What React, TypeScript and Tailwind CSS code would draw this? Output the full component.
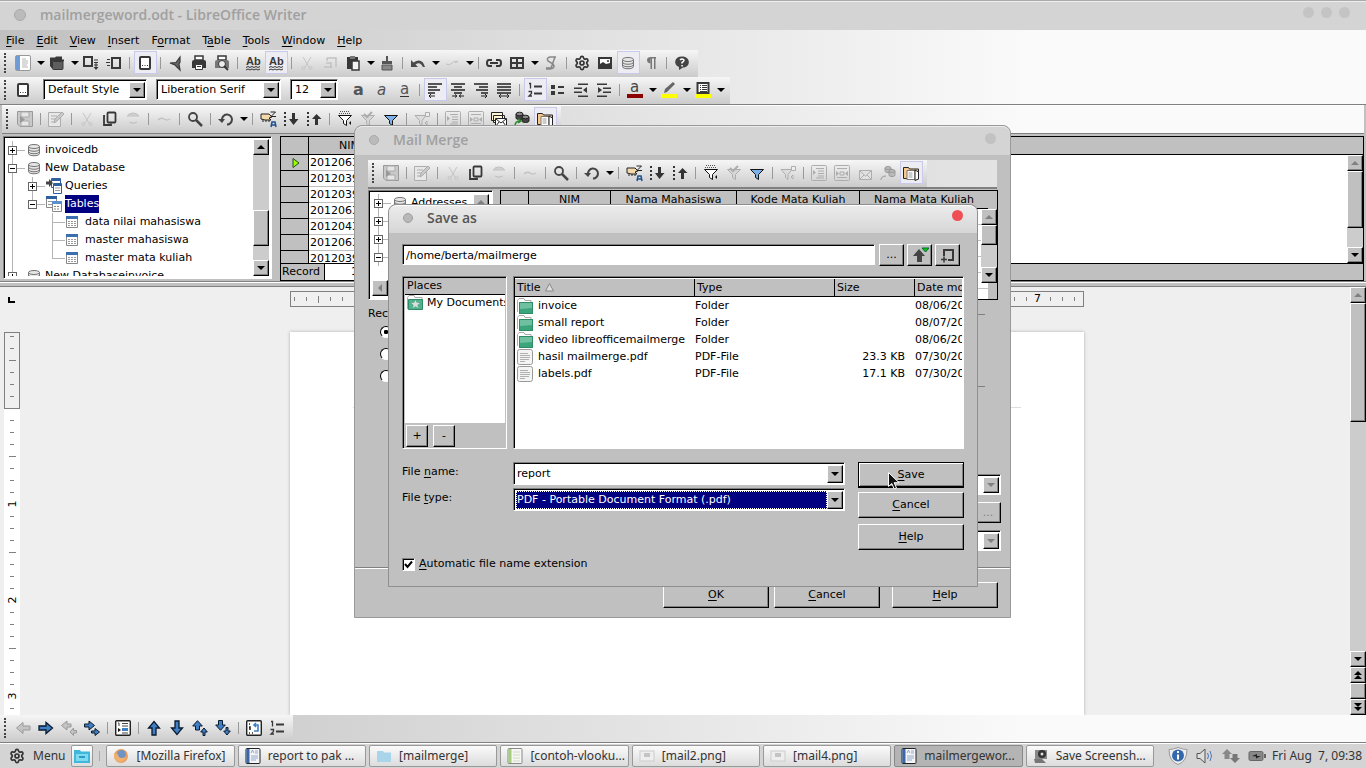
import type { ReactNode } from 'react'
import { Settings } from 'lucide-react'

const RAISED = 'border border-t-white border-l-white border-r-black border-b-black bg-[#c0c0c0] shadow-[inset_-1px_-1px_#808080]'
const SUNKEN = 'border border-t-[#808080] border-l-[#808080] border-r-white border-b-white shadow-[inset_1px_1px_#000]'
const BAR = 'bg-linear-to-b from-[#f6f6f6] to-[#cbcbcb]'
const FADE = 'bg-linear-to-r from-[#c0c0c0] to-[#fafafa] to-75%'

const D = '#383838'
const G = '#adadad'

const funnel = 'M1.5 4.5h13L9.5 9.5v5l-3-2v-3z'
const arrowR = 'M1 6h7V2.5l6.5 5.5L8 13.5V10H1z'

const disk = (
  <g>
    <path d="M.5.5h15v15H3L.5 13z" fill="#c9c9c9" stroke="#999" />
    <path d="M4 1h8v5H4zM4 10h8v5H4z" fill="#e6e6e6" stroke="#aaa" />
    <path d="M3 5l5 3.5L3 12z" fill="#999" />
  </g>
)

const ICONS: Record<string, ReactNode> = {
  new: <g><rect x=".5" y=".5" width="15" height="15" rx="1.5" fill="#fff" stroke="#999" /><path d="M1 1h4v14H1z" fill="#6f9cd4" /><path d="M7 4h4M7 6h6M7 8h6M7 10h5M7 12h6" stroke="#b5b5b5" /></g>,
  open: <g fill={D}><path d="M1 2.500h5l1-1h6v3h2v2H3v7L1 11z" /><path d="M3.500 6.500H14v7q0 1-1 1H4.500q-1 0-1-1z" fill="#5e5e5e" stroke={D} /></g>,
  save: <g stroke={D} fill="none"><rect x="1" y="2" width="8" height="9" strokeWidth="2" /><path d="M11 5h4M11 7.500h4M11 10h4M13 8v5" /><path d="M10.500 12h5L13 15z" fill={D} stroke="none" /></g>,
  mail: <g stroke={D} fill="none"><rect x="6" y="3" width="8" height="10" strokeWidth="2" /><path d="M1 4.500h3M0 7.500h4M1 10.500h3" /></g>,
  page: <g fill="none" stroke={D}><rect x="3" y="2" width="10" height="12" rx="1" strokeWidth="2" fill="#fff" /><path d="M5 10.500h6" strokeDasharray="1 1.500" /></g>,
  pdf: <path d="M12 2v5l-1 2 1 6-3-3-2-2-5-2 6-.5z" fill="#666" stroke={D} strokeWidth="1.200" />,
  print: <g fill={D}><path d="M4 1h8v4H4z" fill="#fff" stroke={D} strokeWidth="1.500" /><path d="M1 7q0-2 2-2h10q2 0 2 2v6H1z" /><path d="M4.500 9.500h7v5h-7z" fill="#fff" stroke={D} /><path d="M6 11h4v1H6z" /></g>,
  preview: <g fill={D}><path d="M4 1h8v4H4z" fill="#fff" stroke={D} strokeWidth="1.500" /><path d="M1 7q0-2 2-2h10q2 0 2 2v6H1z" fill="#777" /><circle cx="8" cy="9" r="3.500" fill="#eee" stroke={D} /><path d="M10 11l4 4" stroke={D} strokeWidth="2" /></g>,
  spell: <g><text x="1" y="10" fontSize="11" fontWeight="700" fill={D} fontFamily="Liberation Sans">Ab</text><path d="M1 12.500l2-1 2 1 2-1 2 1 2-1 2 1 2-1M1 15l2-1 2 1 2-1 2 1 2-1 2 1 2-1" stroke={D} fill="none" /></g>,
  cut: <g fill="none" stroke="#c6c6c6"><path d="M4 2l6 10M12 2L6 12" /><circle cx="4.500" cy="13" r="1.500" /><circle cx="11.500" cy="13" r="1.500" /></g>,
  copyOff: <g fill="none" stroke="#c2c2c2"><path d="M5 3h9v9M5 3v3M2 12h8M4 8h5v5" strokeWidth="1.500" /></g>,
  copy: <g fill="none" stroke={D} strokeWidth="1.800"><rect x="5.500" y="1.500" width="8" height="10" rx="1" /><path d="M3 5H2v9h7v-1.500" /></g>,
  pasteOff: <path d="M2 5q2-3 6-3t6 3H2M4 11q4 3 8 0" fill="#d0d0d0" stroke="#c2c2c2" />,
  paste: <g><path d="M2 2h11v12H2z" fill={D} /><path d="M5 1h5v3H5z" fill="#777" /><path d="M7 6h7v9H7z" fill="#f2f2f2" stroke={D} strokeWidth="1.500" /></g>,
  brush: <g fill="#555"><path d="M7 1h2v5H7zM3 6h10v3H3z" /><path d="M3 10h10v5H3z" fill="#888" stroke="#555" /></g>,
  undo: <path d="M1 5v7h7L5.500 9.500Q10 6 13 12h2Q12 2 3.500 7.500z" fill="#4a4a4a" />,
  redoOff: <path d="M2 9q4 2 6-1t6-1M11 8l3-2" fill="none" stroke="#c0c0c0" />,
  link: <g fill="none" stroke={D} strokeWidth="2"><path d="M6 5H3Q1 5 1 8t2 3h3M10 5h3q2 0 2 3t-2 3h-3M4 8h8" /></g>,
  table: <g fill="none" stroke={D} strokeWidth="2"><rect x="2" y="3" width="12" height="10" /><path d="M8 3v10M2 8h12" /></g>,
  draw: <path d="M13 2H7Q3 3 5 6l5 3q3 4-3 5H3M3 13h5l4-11" fill="none" stroke="#888" strokeWidth="1.500" />,
  image: <g><rect x="2" y="3" width="12" height="10" fill="#fff" stroke={D} strokeWidth="2" /><path d="M3 12V9l3-2 3 2 4-1v4z" fill={D} /><circle cx="11" cy="6" r="1" fill={D} /></g>,
  db: <g fill="#e6e6e6" stroke="#757575"><path d="M2.500 4.500v7c0 3 11 3 11 0v-7" /><ellipse cx="8" cy="4.500" rx="5.500" ry="2" /><path d="M2.500 7c0 3 11 3 11 0M2.500 9.500c0 3 11 3 11 0" fill="none" /></g>,
  para: <g fill="#777"><path d="M8 2h5v1.500H7.500v5Q4 8 4 5t4-3z" /><path d="M7.500 2h1.500v12H7.500zM11 2h1.500v12H11z" /></g>,
  help: <g><path d="M8 1.500c9 0 9 11 1 11L5 15v-3C-1 10 0 1.500 8 1.500z" fill="#444" /><path d="M6 5q2-2 4 0 0 1.500-2 2.500v1" stroke="#fff" strokeWidth="1.500" fill="none" /><path d="M7.300 10h1.500v1.500H7.300z" fill="#fff" /></g>,
  bold: <text x="3" y="13" fontSize="16" fontWeight="700" fill="#555" fontFamily="DejaVu Sans">a</text>,
  italic: <text x="4" y="13" fontSize="15" fontStyle="italic" fill="#555" fontFamily="DejaVu Sans">a</text>,
  under: <g><text x="4" y="12" fontSize="15" fill="#555" fontFamily="DejaVu Sans">a</text><path d="M4 14.500h9" stroke="#333" /></g>,
  left: <g stroke="#222" fill="none"><path d="M1 2h14M1 5h9M1 8h12M1 11h7" strokeWidth="1.600" /><path d="M2 14h6M4 12l-2 2 2 2" /></g>,
  center: <g stroke="#222" fill="none"><path d="M1 2h14M4 5h8M1 8h14M4 11h8" strokeWidth="1.600" /><path d="M2 14h4M10 14h4M5 12.500l2 1.500-2 1.500M11 12.500L9 14l2 1.500" /></g>,
  right: <g stroke="#222" fill="none"><path d="M1 2h14M6 5h9M3 8h12M8 11h7" strokeWidth="1.600" /><path d="M8 14h6M12 12l2 2-2 2" /></g>,
  justify: <g stroke="#222" fill="none"><path d="M1 2h14M1 5h14M1 8h14M1 11h14" strokeWidth="1.600" /><path d="M3 14h10M5 12l-2 2 2 2M11 12l2 2-2 2" /></g>,
  nums: <g><path d="M7 4.500h8M7 11.500h8" stroke={D} strokeWidth="2" /><path d="M2 1.500h1.500v5M1.500 9.500h3v2l-2.500 2.500h3" fill="none" stroke={D} strokeWidth="1.300" /></g>,
  bullets: <g fill={D}><path d="M1 3h4v4H1zM1 9h4v4H1zM8 4h6v2H8zM8 10h6v2H8z" /></g>,
  outdent: <g fill={D}><path d="M5 1.500h10V3H5zM1 5.500h8V7H1zM1 9.500h8V11H1zM5 13.500h10V15H5zM14 5v6l-4-3z" /></g>,
  indent: <g fill={D}><path d="M1 1.500h10V3H1zM7 5.500h8V7H7zM7 9.500h8V11H7zM1 13.500h10V15H1zM2 5v6l4-3z" /></g>,
  fontColor: <g><text x="3" y="10" fontSize="15" fill="#444" fontFamily="DejaVu Sans">a</text><path d="M0 12h16v4H0z" fill="#8b0000" /></g>,
  marker: <g><path d="M3 11l1-4 8-7 2 2-8 8z" fill="#666" /><path d="M0 12h16v4H0z" fill="#ff0" /></g>,
  fill: <g><path d="M2.500 1h11v10h-11z" fill="#fff" stroke={D} strokeWidth="2" /><path d="M5 3.500h1M7 3.500h5M5 5.500h1M7 5.500h5M5 7.500h1M7 7.500h5M5 9.500h7" stroke={D} /><path d="M0 12h16v4H0z" fill="#ff0" /></g>,
  disk,
  edit: <g><path d="M.5 1.500h12v14H.5z" fill="#e8e8e8" stroke={G} /><path d="M3 5h6M3 8h5M3 11h4" stroke={G} /><path d="M6 12l1-4 7-7 2 2-7 7z" fill="#c9c9c9" stroke={G} /></g>,
  wave: <path d="M2 9q3-3 6-1t6 0" fill="none" stroke="#c2c2c2" strokeWidth="1.500" />,
  search: <g fill="none" stroke="#444"><circle cx="6" cy="6" r="4" strokeWidth="1.800" /><path d="M9 9l6 6" strokeWidth="2.500" /></g>,
  refresh: <g><path d="M4 9a5 5 0 1 1 5 4.500" fill="none" stroke="#444" strokeWidth="2" /><path d="M0 8h7L4 12z" fill="#444" /></g>,
  sort: <g><path d="M1 3h8l3 3-3 1 2 2H5l-4-1z" fill="#f4d9ab" stroke="#222" /><path d="M10.500 1h5L11 5.500h5" fill="none" stroke="#222" /><path d="M2 10l8 0" stroke="#222" strokeDasharray="2 1" /><path d="M11 16l1-5h3l1 5M11.500 14h4" fill="none" stroke="#1d4f91" strokeWidth="1.500" /></g>,
  sortDown: <g fill="#333"><path d="M1 1h2v2H1zM1 5h2v2H1zM1 9h2v2H1zM1 13h2v2H1zM9 2h3v6h3.500L10.500 14 6 8h3z" /></g>,
  sortUp: <g fill="#333"><path d="M1 1h2v2H1zM1 5h2v2H1zM1 9h2v2H1zM1 13h2v2H1zM9 14h3V8h3.500L10.500 3 6 8h3z" /></g>,
  autoFilter: <g><path d="M3 .5h10M2 2.500h12" stroke="#555" strokeDasharray="1 1" /><path d={funnel} fill="#fff" stroke="#111" /><path d="M14 10v4l-2-2z" fill="#111" /></g>,
  filterOff: <g><path d={funnel} fill="#d6d6d6" stroke={G} /><path d="M4 3l3 3 5-5" fill="none" stroke={G} strokeWidth="2" /></g>,
  filter: <path d={funnel} fill="#7db0e8" stroke="#111" />,
  removeFilter: <g><path d="M1 4.500h11L8 9.500v5l-2.500-2v-3z" fill="#dcdcdc" stroke={G} /><path d="M11.500 1.500h4v4h-4zM13 10v4l-2-2z" fill="#eee" stroke={G} /></g>,
  toText: <g fill="none" stroke={G}><rect x=".5" y=".5" width="15" height="15" rx="1" /><path d="M5 3.500h8M7 6h6M7 8.500h6M7 11h6M5 13h8" /><path d="M2 5v5l3-2.500z" fill={G} stroke="none" /></g>,
  toFields: <g fill="none" stroke={G}><rect x=".5" y=".5" width="15" height="15" rx="1" /><path d="M3 3.500h10M3 12.500h10M6 7h4v3H6z" /><path d="M2 6v5l3-2.500zM14 6v5l-3-2.500z" fill={G} stroke="none" /></g>,
  letters: <g stroke="#222"><path d="M.5 1.500h11v8H.5zM2.500 4.500h11v7h-11z" fill="#fff6d8" /><path d="M4.500 7.500h11v8h-11z" fill="#fff" /><path d="M5 8l5 4 5-4M5 15l3-4M15 15l-3-4" fill="none" /></g>,
  letter: <g stroke={G}><path d="M2.500 5.500h12v9h-12z" fill="#e2e2e2" /><path d="M3 6l5.500 5L14 6M3 14l4-4M14 14l-4-4" fill="none" /></g>,
  source: <g><path d="M2 3v4c0 2 7 2 7 0V3M8 6v4c0 2 7 2 7 0V6" fill="#444" stroke="#222" /><ellipse cx="5.500" cy="3" rx="3.500" ry="1.800" fill="#888" stroke="#222" /><ellipse cx="11.500" cy="6" rx="3.500" ry="1.800" fill="#888" stroke="#222" /><path d="M1 15q0-5 5-5M4 8l3 2-3 2" fill="none" stroke="#2c8a2c" strokeWidth="1.500" /></g>,
  sourceOff: <g fill="#bbb" stroke="#999"><path d="M5 3v3c0 2 6 2 6 0V3M9 6v4c0 2 6 2 6 0V6" /><ellipse cx="8" cy="3" rx="3" ry="1.500" /><ellipse cx="12" cy="6" rx="3" ry="1.500" /><path d="M1 15q0-4 5-4" fill="none" /></g>,
  explorer: <g><path d="M.5 13.500V2.500h5l1 1.500h9v10z" fill="#f5c98b" stroke="#222" /><path d="M4 5.500h8v9H4z" fill="#fff" stroke="#777" /><path d="M5.500 8h4M5.500 10h4M5.500 12h4" stroke="#999" /><path d="M12 5l3.500 2v7L12 15.500z" fill="#fff" stroke="#222" /></g>,
  prevOff: <path d={arrowR} transform="rotate(180 8 8)" fill="#c4c4c4" stroke="#999" />,
  next: <path d={arrowR} fill="#3f7fc4" stroke="#0a1a2f" strokeWidth="1.300" />,
  prevsOff: <g fill="#c4c4c4" stroke="#999"><path d="M10 4H6V1L.5 5.500 6 10V7h4z" /><path d="M15.500 10.500h-3V8L9 12l3.500 3.500V13h3z" /></g>,
  nexts: <g fill="#3f7fc4" stroke="#0a1a2f"><path d="M.5 4H5V1l5.500 4.500L5 10V7H.5z" /><path d="M7.500 11H11V8.500l4.500 3.500-4.500 3.500V13H7.500z" /></g>,
  nav: <g><rect x=".7" y=".7" width="14.600" height="14.600" rx="1" fill="#fff" stroke="#222" strokeWidth="1.400" /><path d="M3 3h1v3M7 3.500h6M7 6h6M7 13h6" stroke="#444" fill="none" /><path d="M7 8h6v3H7z" fill="#3f7fc4" /><path d="M3 8v4l3-2z" fill="#111" /></g>,
  up: <path d={arrowR} transform="rotate(-90 8 8)" fill="#3f7fc4" stroke="#0a1a2f" strokeWidth="1.300" />,
  down: <path d={arrowR} transform="rotate(90 8 8)" fill="#3f7fc4" stroke="#0a1a2f" strokeWidth="1.300" />,
  ups: <g fill="#3f7fc4" stroke="#0a1a2f"><path d="M3.500 10V6H.7L5.500.7 10.300 6H7.500v4z" /><path d="M11 15.500V12H8.700L12 8l3.300 4H13v3.500z" /></g>,
  downs: <g fill="#3f7fc4" stroke="#0a1a2f"><path d="M3.500.5V5H.7l4.800 5.300L10.300 5H7.500V.5z" /><path d="M11 7.500V11H8.700l3.300 4 3.300-4H13V7.500z" /></g>,
  restart: <g><rect x=".7" y=".7" width="14.600" height="14.600" rx="1" fill="#fff" stroke="#222" strokeWidth="1.400" /><path d="M3 4h1M3 7h1v3M3 13h1M6 13h1" stroke="#222" strokeWidth="1.500" /><path d="M8 5h4v6H8M10 3L8 5l2 2" fill="none" stroke="#3f7fc4" strokeWidth="1.600" /></g>,
  query: <g><path d="M5.500.5h9v9h-9z" fill="#fff" stroke="#2f5f9f" /><path d="M7.500 5.500h8v10h-8z" fill="#fff" stroke="#2f5f9f" /><path d="M5.500 1h9v2h-9zM7.500 6h8v2h-8z" fill="#2f5f9f" /><path d="M9 10h5M9 12.500h5" stroke="#999" /><path d="M0 3.500h3V1l4 4-4 4V6.500H0z" fill="#444" /></g>,
  tables: <g><path d="M.5.500h10v11H.5z" fill="#fff" stroke="#888" /><path d="M0 0h11v3H0z" fill="#2f5f9f" /><path d="M2 5.500h7M2 8.500h7" stroke="#999" /><path d="M6.500 5.500h9v10h-9z" fill="#fff" stroke="#888" /><path d="M6 5h10v3H6z" fill="#5b8fd0" /><path d="M8 10.500h6M8 13h6" stroke="#888" strokeDasharray="2 1" /></g>,
  sheet: <g><path d="M.5 2.500h11v11H.5z" fill="#fff" stroke="#888" /><path d="M0 2h12v3H0z" fill="#3a6fb0" /><path d="M2 7.500h8M2 9.500h8M2 11.500h8" stroke="#999" strokeDasharray="2 1" /></g>,
  folder: <g><path d="M.5 14V2.500L2 .5h5l1 2h6v12" fill="#fff" stroke="#aaa" /><path d="M2 4h14v12H2z" fill="#3aa57c" /><path d="M3 5h12v5L3 11z" fill="#6fc0a0" /><path d="M2.500 4.500h13v11h-13z" fill="none" stroke="#2f8a66" /></g>,
  docs: <g><path d="M.5 14V2.500L2 .5h5l1 2h7v12" fill="#fff" stroke="#aaa" /><path d="M1.500 4.500h14v10h-14z" fill="#52b08c" stroke="#2f8a66" /><path d="M8.500 5l1.200 2.800 3.100.2-2.400 1.900.8 3-2.700-1.600-2.700 1.600.8-3L4.200 8l3.100-.2z" fill="#ddd" /></g>,
  file: <g><rect x=".5" y=".5" width="15" height="15" rx="2" fill="#f4f4f4" stroke="#999" /><path d="M3 4.500h8M3 6.500h10M3 8.500h10M3 10.500h9M3 12.500h5" stroke="#b0b0b0" /></g>,
}

function Icon({ name }: { name: string }) {
  if (name === 'gear') return <Settings size={16} color="#333" strokeWidth={2.5} />
  return <svg viewBox="0 0 16 16" className="h-4 w-4 shrink-0 overflow-visible" aria-hidden="true">{ICONS[name]}</svg>
}

function Tri({ dir = 'down', off = false }: { dir?: 'down' | 'up' | 'left' | 'dup' | 'ddown'; off?: boolean }) {
  const d = { down: 'M0 2h8L4 6z', up: 'M0 6h8L4 2z', left: 'M6 0v8L2 4z', dup: 'M0 4h8L4 0zM0 8h8L4 4z', ddown: 'M0 0h8L4 4zM0 4h8L4 8z' }[dir]
  return <svg viewBox="0 0 8 8" className="h-2 w-2 shrink-0" aria-hidden="true"><path d={d} fill={off ? '#808080' : '#000'} /></svg>
}

// '|' separator, 'v' drop-down arrow, '*name' pressed button
function Toolbar({ label, items, children }: { label: string; items: string[]; children?: ReactNode }) {
  return (
    <div role="toolbar" aria-label={label} className={`flex h-[27px] w-fit items-center pr-1 pb-0.5 ${BAR}`}>
      <span className="mr-1.5 ml-1 h-5 border-l-2 border-dotted border-[#444]" />
      {children}
      {items.map((it, i) => {
        if (it === '|') return <span key={i} className="mr-1 ml-[3px] h-3 w-px bg-[#999]" />
        if (it === 'v') return <button key={i} type="button" aria-label="More" className="flex h-6 w-[11px] items-center justify-center"><Tri /></button>
        const on = it[0] === '*'
        const name = on ? it.slice(1) : it
        return (
          <button key={i} type="button" aria-label={name}
            className={on ? 'h-[23px] w-[23px] border border-[#c9c9ec] bg-[#ececf2] pl-0.5' : 'h-[23px] w-[23px] pl-[3px]'}>
            <Icon name={name} />
          </button>
        )
      })}
    </div>
  )
}

const STD = ['new', 'v', 'open', 'v', 'save', 'mail', '|', '*page', '|', 'pdf', 'print', 'preview', '|', 'spell', '*spell', '|', 'cut', 'copyOff', 'paste', 'v', 'brush', '|', 'undo', 'v', 'redoOff', 'v', '|', 'link', 'table', 'v', 'draw', '|', 'gear', 'image', '*db', 'para', '|', 'help']
const FMT = ['bold', 'italic', 'under', '|', '*left', 'center', 'right', 'justify', '|', '*nums', 'bullets', 'outdent', 'indent', '|', 'fontColor', 'v', 'marker', 'v', 'fill', 'v']
const DATA = ['disk', '|', 'edit', '|', 'cut', 'copy', 'pasteOff', '|', 'wave', '|', 'search', '|', 'refresh', 'v', '|', 'sort', 'sortDown', 'sortUp', '|', 'autoFilter', 'filterOff', 'filter', '|', 'removeFilter', '|', 'toText', 'toFields']
const NAV = ['prevOff', 'next', 'prevsOff', 'nexts', '|', 'nav', '|', 'up', 'down', 'ups', 'downs', '|', 'restart', 'nums']

function Combo({ label, value, className, off }: { label: string; value: string; className: string; off?: boolean }) {
  return (
    <div className={`flex h-[21px] bg-white p-0.5 pr-px pb-px ${SUNKEN} ${className}`}>
      <select aria-label={label} defaultValue={value} disabled={off} className="min-w-0 flex-1 appearance-none bg-white pl-0.5 leading-4 outline-none">
        <option>{value}</option>
      </select>
      <span className={`pointer-events-none flex w-4 items-center justify-center ${RAISED}`}><Tri off={off} /></span>
    </div>
  )
}

function Guide({ kind }: { kind: string }) {
  return (
    <svg viewBox="0 0 20 18" className="h-[18px] w-5 shrink-0" fill="none" stroke="#b4b4b4" aria-hidden="true">
      {kind !== ' ' && <path d={kind === 'l' || kind === 'n' ? 'M6.500 0v9' : 'M6.500 0v18'} />}
      {kind !== ' ' && kind !== 'v' && <path d="M6 9.500h13" />}
      {(kind === '+' || kind === '-' || kind === 'n') && <rect x="2.500" y="5.500" width="8" height="8" fill="#fff" stroke="#666" />}
      {(kind === '+' || kind === '-' || kind === 'n') && <path d={kind === '+' ? 'M4 9.500h5M6.500 7v5' : 'M4 9.500h5'} stroke="#000" />}
    </svg>
  )
}

type Row = { g: string; icon: string; t: string; sel?: boolean }

const TREE: Row[] = [
  { g: '+', icon: 'db', t: 'invoicedb' },
  { g: '-', icon: 'db', t: 'New Database' },
  { g: 'v+', icon: 'query', t: 'Queries' },
  { g: 'vn', icon: 'tables', t: 'Tables', sel: true },
  { g: 'v t', icon: 'sheet', t: 'data nilai mahasiswa' },
  { g: 'v t', icon: 'sheet', t: 'master mahasiswa' },
  { g: 'v l', icon: 'sheet', t: 'master mata kuliah' },
  { g: '+', icon: 'db', t: 'New Databaseinvoice' },
]

const MERGE_TREE: Row[] = [
  { g: '+', icon: 'db', t: 'Addresses' },
  { g: '+', icon: 'db', t: '' },
  { g: '+', icon: 'db', t: '' },
  { g: '-', icon: 'db', t: '' },
]

function Tree({ rows, className = '' }: { rows: Row[]; className?: string }) {
  return (
    <ul className={`min-w-0 flex-1 overflow-hidden ${className}`}>
      {rows.map((r, n) => (
        <li key={n} className="flex h-[18px] items-center whitespace-nowrap">
          {r.g.split('').map((k, i) => <Guide key={i} kind={k} />)}
          <Icon name={r.icon} />
          <span className={r.sel ? 'ml-[3px] bg-[#000080] leading-[18px] text-white' : 'ml-[3px]'}>{r.t}</span>
        </li>
      ))}
    </ul>
  )
}

function ScrollBtn({ dir, off }: { dir: 'down' | 'up' | 'left' | 'dup' | 'ddown'; off?: boolean }) {
  return <button type="button" aria-label={`Scroll ${dir}`} className={`flex h-4 w-4 shrink-0 items-center justify-center ${RAISED}`}><Tri dir={dir} off={off} /></button>
}

const IDS = ['2012063', '2012039', '2012039', '2012063', '2012043', '2012063', '2012039']
const TH = 'border-b border-black bg-[#c0c0c0] p-0 font-normal'

function Grid({ ids, cols }: { ids: string[]; cols: { t: string; w: string }[] }) {
  return (
    <table className="w-full table-fixed border-separate border-spacing-0">
      <thead>
        <tr className="h-[18px]">
          <th className={`w-[28px] border-r ${TH}`} />
          {cols.map((c, i) => <th key={i} className={`whitespace-nowrap ${TH} ${c.w} ${c.t ? 'border-r' : ''}`}>{c.t}</th>)}
        </tr>
      </thead>
      <tbody>
        {ids.map((id, i) => (
          <tr key={i} className="h-4">
            <td className="border-r border-b border-black bg-[#c0c0c0] p-0">
              {i === 0 && <svg viewBox="0 0 8 10" className="ml-[11px] h-2.5 w-2"><path d="M1 .5v9L7 5z" fill="#9f0" stroke="#274e13" /></svg>}
            </td>
            {cols.map((c, j) => <td key={j} className={`overflow-hidden p-0 pl-px leading-[15px] ${c.t ? 'border-b border-[#c0c0c0]' : ''}`}>{j === 0 ? id : ''}</td>)}
          </tr>
        ))}
      </tbody>
    </table>
  )
}

function Dot({ className }: { className: string }) {
  return <span className={`block rounded-full ${className}`} />
}

function Acc({ t, at = 0 }: { t: string; at?: number }) {
  return <span className="whitespace-pre">{t.slice(0, at)}<span className="underline underline-offset-2">{t[at]}</span>{t.slice(at + 1)}</span>
}

function HRuler() {
  return (
    <div className="flex h-4 w-[794px] items-center overflow-hidden border border-[#808080] bg-[#f0f0f0] pl-[3px]">
      {Array.from({ length: 66 }, (_, i) => {
        const k = (i + 2) % 8
        // inch numbers run under the dialogs, only the outer ones carry a label
        const num = k === 0 && i > 60
        return (
          <span key={i} className="flex w-3 shrink-0 items-center">
            {num ? <b className="-ml-1 font-normal">{(i - 6) / 8}</b> : <i className={k === 4 ? 'h-[7px] w-px bg-[#808080]' : 'h-1 w-px bg-[#808080]'} />}
          </span>
        )
      })}
    </div>
  )
}

function VRuler() {
  return (
    <div className="flex w-4 flex-col overflow-hidden bg-white">
      <div className="flex h-[77px] shrink-0 flex-col items-center border border-[#808080] bg-[#f0f0f0] pt-[3px]">
        {[0, 1, 2, 3, 4, 5].map(i => <span key={i} className="h-3 shrink-0"><i className={i === 2 ? 'block h-px w-[7px] bg-[#808080]' : 'block h-px w-1 bg-[#808080]'} /></span>)}
      </div>
      <div className="flex flex-col items-center pt-[5px]">
        {Array.from({ length: 25 }, (_, i) => (
          <span key={i} className="flex h-3 shrink-0 items-center justify-center">
            {i % 8 === 7 ? <b className="-rotate-90 font-normal">{(i + 1) / 8}</b> : <i className={i % 8 === 3 ? 'h-px w-[7px] bg-[#808080]' : 'h-px w-1 bg-[#808080]'} />}
          </span>
        ))}
      </div>
    </div>
  )
}

const PUSH = `h-[26px] w-[106px] ${RAISED}`
const TITLE = 'flex-1 font-[Open_Sans] text-sm font-semibold'

function MailMerge() {
  return (
    <section role="dialog" aria-label="Mail Merge" className="absolute top-[125px] left-[354px] w-[657px] rounded-t-lg border border-[#999] bg-[#c0c0c0]">
      <header className="flex h-[29px] items-center rounded-t-lg border-t border-[#ececec] bg-[#d4d4d4] px-3.5 pb-0.5">
        <Dot className="h-2.5 w-2.5 border border-[#a8a8a8] bg-[#bbb]" />
        <h2 className={`ml-3.5 text-[#a0a0a0] ${TITLE}`}>Mail Merge</h2>
        <Dot className="mb-1 h-[11px] w-[11px] bg-[#c2c2c2]" />
      </header>
      <div className="mx-[13px] mt-[5px] border-b-2 border-[#808080] bg-linear-to-r from-[#c8c8c8] to-[#e4e4e4]">
        <Toolbar label="Merge data" items={[...DATA, 'letter', 'sourceOff', '*explorer']} />
      </div>
      <div className="mt-px mr-3 ml-[13px] flex h-[110px] gap-[7px]">
        <div className={`flex w-[125px] bg-white p-[3px] ${SUNKEN}`}>
          <div className="flex min-w-0 flex-1 flex-col">
            <Tree rows={MERGE_TREE} />
            <div className="flex bg-[#ccc]"><ScrollBtn dir="left" off /></div>
          </div>
          <div className="bg-[#ccc]"><ScrollBtn dir="up" off /></div>
        </div>
        <div className="flex min-w-0 flex-1 border border-black bg-[#c0c0c0]">
          <div className="min-w-0 flex-1 overflow-hidden bg-white">
            <Grid ids={['', '', '', '', '']} cols={[{ t: 'NIM', w: 'w-[82px]' }, { t: 'Nama Mahasiswa', w: 'w-[126px]' }, { t: 'Kode Mata Kuliah', w: 'w-[123px]' }, { t: 'Nama Mata Kuliah', w: 'w-[129px]' }]} />
          </div>
          <div className="-ml-[7px] mt-[18px] mb-4 flex w-4 flex-col bg-[#ccc]">
            <ScrollBtn dir="up" off />
            <span className={`h-5 ${RAISED}`} />
            <span className="flex-1" />
            <ScrollBtn dir="down" />
          </div>
        </div>
      </div>
      <div className="mx-[13px] mt-1.5 flex items-center gap-2 pr-3">Records<hr className="flex-1 border-[#808080]" /></div>
      <div className="mt-1 ml-[25px] flex flex-col gap-2.5">
        {['All', 'Selected records', 'From'].map((t, i) => (
          <input key={t} aria-label={t} type="radio" name="records" defaultChecked={i === 0} className="h-3 w-3 appearance-none rounded-full border border-t-black border-l-black border-r-white border-b-white bg-white checked:bg-[radial-gradient(#000_28%,#fff_34%)]" />
        ))}
      </div>
      <hr className="mt-1 mr-[25px] ml-40 border-[#808080]" />
      <div className="mt-[87px] mr-[9px] flex flex-col items-end gap-[7px]">
        <Combo label="Field" value="" className="w-[200px]" off />
        <button type="button" aria-label="Browse" className={`h-[21px] w-[26px] text-[#808080] ${RAISED}`}>...</button>
        <Combo label="File format" value="" className="w-[200px]" off />
      </div>
      <div className="mt-4 flex justify-end border-t border-[#808080] pt-3.5 pr-3 pb-[9px] shadow-[inset_0_1px_#fff]">
        <button type="button" className={`mr-[5px] ${PUSH}`}><Acc t="OK" /></button>
        <button type="button" className={`mr-3 ${PUSH}`}><Acc t="Cancel" /></button>
        <button type="button" className={PUSH}><Acc t="Help" /></button>
      </div>
    </section>
  )
}

const FILES = [
  { n: 'invoice', icon: 'folder', type: 'Folder', size: '', date: '08/06/2015' },
  { n: 'small report', icon: 'folder', type: 'Folder', size: '', date: '08/07/2015' },
  { n: 'video libreofficemailmerge', icon: 'folder', type: 'Folder', size: '', date: '08/06/2015' },
  { n: 'hasil mailmerge.pdf', icon: 'file', type: 'PDF-File', size: '23.3 KB', date: '07/30/2015' },
  { n: 'labels.pdf', icon: 'file', type: 'PDF-File', size: '17.1 KB', date: '07/30/2015' },
]

function SaveAs() {
  const th = 'border-b border-black p-0 pl-0.5 text-left font-normal whitespace-nowrap'
  return (
    <section role="dialog" aria-label="Save as" className="absolute top-[204px] left-[388px] w-[590px] rounded-t-lg border border-[#8f8f8f] bg-[#c0c0c0]">
      <header className="flex h-[28px] items-center rounded-t-lg border-t border-white bg-linear-to-b from-[#ebebeb] to-[#d6d6d6] px-3.5 pb-1">
        <Dot className="h-2.5 w-2.5 border border-[#a0a0a0] bg-[#b8b8b8]" />
        <h2 className={`ml-3.5 text-[#555] ${TITLE}`}>Save as</h2>
        <button type="button" aria-label="Close" className="mb-1 h-[11px] w-[11px] rounded-full bg-[#f04e55]" />
      </header>
      <div className="px-[13px] pt-[11px] pb-3.5">
        <div className="flex gap-[3px]">
          <input aria-label="Path" defaultValue="/home/berta/mailmerge" className={`h-[21px] min-w-0 flex-1 bg-white px-[3px] pt-0.5 outline-none ${SUNKEN}`} />
          <button type="button" aria-label="Servers" className={`ml-px h-[22px] w-[25px] ${RAISED}`}>...</button>
          <button type="button" aria-label="Up One Level" className={`flex h-[22px] w-[25px] items-center justify-center ${RAISED}`}>
            <svg viewBox="0 0 18 16" className="h-4 w-[18px]"><path d="M8 2l6 7h-3v6H6V9H2z" fill="#444" /><path d="M11 1h7l-3.500 4z" fill="#0c0" stroke="#063" /></svg>
          </button>
          <button type="button" aria-label="Create New Directory" className={`mr-1 flex h-[22px] w-[25px] items-center justify-center ${RAISED}`}>
            <svg viewBox="0 0 16 16" className="h-4 w-4"><path d="M4 9V3h9v10H8" fill="none" stroke={D} strokeWidth="2" /><path d="M1 12.500h6M4 9.500v6" stroke={D} strokeWidth="1.500" /></svg>
          </button>
        </div>
        <div className="mt-2.5 flex h-[173px] gap-1.5">
          <div className={`flex w-[105px] flex-col overflow-hidden p-px pt-0.5 pl-0.5 ${SUNKEN}`}>
            <div className="h-4 border-b border-black pl-0.5 leading-[14px]">Places</div>
            <div className="flex flex-1 items-start gap-1 overflow-hidden bg-white pl-0.5 whitespace-nowrap"><Icon name="docs" />My Documents</div>
            <div className="flex gap-[5px] pt-0.5 pl-px">
              <button type="button" aria-label="Add place" className={`h-[22px] w-[22px] ${RAISED}`}>+</button>
              <button type="button" aria-label="Remove place" className={`h-[22px] w-[22px] ${RAISED}`}>-</button>
            </div>
          </div>
          <div className={`min-w-0 flex-1 overflow-hidden bg-white p-px pt-0.5 pl-px ${SUNKEN}`}>
            <table className="w-full table-fixed border-separate border-spacing-0 overflow-hidden">
              <thead>
                <tr className="h-[18px] bg-[#c0c0c0]">
                  <th className={`w-[180px] border-r ${th}`}><span className="flex items-center gap-1">Title <svg viewBox="0 0 9 9" className="h-[9px] w-[9px]"><path d="M.5 8L4.500.5l4 7.500z" fill="#ddd" stroke="#888" /></svg></span></th>
                  <th className={`w-[140px] border-r ${th}`}>Type</th>
                  <th className={`w-[80px] border-r ${th}`}>Size</th>
                  <th className={`overflow-hidden ${th}`}>Date modified</th>
                </tr>
              </thead>
              <tbody>
                {FILES.map(f => (
                  <tr key={f.n} className="h-[17px] whitespace-nowrap">
                    <td className="p-0 pr-2 pl-0.5"><span className="flex h-[17px] items-center gap-[5px] overflow-hidden"><Icon name={f.icon} />{f.n}</span></td>
                    <td className="p-0">{f.type}</td>
                    <td className="p-0 pr-2.5 text-right">{f.size}</td>
                    <td className="overflow-hidden p-0">{f.date}</td>
                  </tr>
                ))}
              </tbody>
            </table>
          </div>
        </div>
        <div className="mt-[13px] flex">
          <div className="grid h-fit flex-1 grid-cols-[111px_1fr] gap-y-[3px]">
            <label htmlFor="fname" className="pt-0.5"><Acc t="File name:" at={5} /></label>
            <div className={`flex h-[23px] bg-white p-0.5 pr-px pb-px ${SUNKEN}`}>
              <input id="fname" defaultValue="report" className="min-w-0 flex-1 pl-px outline-none" />
              <button type="button" aria-label="Show names" className={`flex w-4 items-center justify-center ${RAISED}`}><Tri /></button>
            </div>
            <label htmlFor="ftype" className="pt-0.5"><Acc t="File type:" at={5} /></label>
            <div className={`flex h-[23px] bg-white p-0.5 pr-px pb-px ${SUNKEN}`}>
              <select id="ftype" className="min-w-0 flex-1 appearance-none border border-dotted border-white bg-[#000080] text-white outline-none">
                <option>PDF - Portable Document Format (.pdf)</option>
              </select>
              <span className={`pointer-events-none flex w-4 items-center justify-center ${RAISED}`}><Tri /></span>
            </div>
          </div>
          <div className="relative ml-[13px] flex flex-col">
            <button type="button" className="h-[26px] w-[106px] border border-b-2 border-black bg-[#c0c0c0] shadow-[inset_1px_1px_#fff,inset_-1px_-1px_#808080]"><Acc t="Save" /></button>
            <button type="button" className={`mt-1 ${PUSH}`}><Acc t="Cancel" /></button>
            <button type="button" className={`mt-1.5 ${PUSH}`}><Acc t="Help" /></button>
            <svg viewBox="0 0 12 18" className="absolute top-2.5 left-[30px] h-[18px] w-3"><path d="M.5.5v14l3.300-3 2.400 5.500 2.300-1-2.400-5.300h4.900z" fill="#111" stroke="#fff" /></svg>
          </div>
        </div>
        <label className="mt-1.5 flex items-center gap-1">
          <span className="grid h-[13px] w-[13px]">
            <input type="checkbox" defaultChecked className={`[grid-area:1/1] h-[13px] w-[13px] appearance-none bg-white ${SUNKEN}`} />
            <svg viewBox="0 0 13 13" className="pointer-events-none z-10 [grid-area:1/1] h-[13px] w-[13px]"><path d="M3 6l2.500 3L10 3.500" fill="none" stroke="#000" strokeWidth="2" /></svg>
          </span>
          <Acc t="Automatic file name extension" />
        </label>
      </div>
    </section>
  )
}

const TASK_ICONS: Record<string, ReactNode> = {
  fox: <g><circle cx="8" cy="8" r="7" fill="#e8a060" /><circle cx="8.500" cy="6.500" r="4.500" fill="#6f93c4" /><path d="M1 5q2 2 4 1 0 4 4 4 3 0 4-2-1 5-5 6-6 0-7-6z" fill="#f0b070" /></g>,
  writer: <g><rect x="1" y=".5" width="14" height="15" rx="1" fill="#f6f6f6" stroke="#222" /><path d="M1.500 1h3v14h-3z" fill="#3a66b0" /><path d="M6 5l1.500-3L9 5M10 3h3M10 5h3M6 8h7M6 10h7M6 12h5" stroke="#8fa6cc" fill="none" /></g>,
  dir: <path d="M1 3h6l1 1.500h7V14H1z" fill="#a9d5ea" />,
  calc: <g><rect x="1" y=".5" width="14" height="15" rx="1" fill="#f6f6f6" stroke="#888" /><path d="M1.500 1h3v14h-3z" fill="#a5cf7c" /><path d="M6 4h7M6 7h7M6 10h7M6 13h7" stroke="#ccdcbc" /></g>,
  img: <g><rect x="1" y="3" width="14" height="10" fill="#eee" stroke="#ccc" /><path d="M5 5h6v4H5z" fill="#c4c4c4" /></g>,
  shot: <g><path d="M2 2h12v9H2z" fill="#888" /><circle cx="9" cy="6" r="4" fill="#333" /><circle cx="9" cy="6" r="1.500" fill="#ddd" /><path d="M1 11h8l4 4H2z" fill="#777" /></g>,
}

const TASKS = [
  { t: '[Mozilla Firefox]', icon: 'fox' },
  { t: 'report to pak ...', icon: 'writer' },
  { t: '[mailmerge]', icon: 'dir' },
  { t: '[contoh-vlooku...', icon: 'calc' },
  { t: '[mail2.png]', icon: 'img' },
  { t: '[mail4.png]', icon: 'img' },
  { t: 'mailmergewor...', icon: 'writer', on: true },
  { t: 'Save Screensh...', icon: 'shot' },
]

function Taskbar() {
  return (
    <footer className="flex h-[25px] shrink-0 items-center border-t border-white bg-[#d4d4d4] font-[Noto_Sans] text-xs leading-5 text-[#333]">
      <button type="button" className="flex shrink-0 items-center gap-2 pl-[9px]"><Settings size={16} color="#333" strokeWidth={2.5} />Menu</button>
      <button type="button" aria-label="Files" className="ml-1.5 flex h-[22px] w-[22px] shrink-0 items-center justify-center rounded-xs border border-[#999] bg-linear-to-b from-white to-[#ddd]">
        <svg viewBox="0 0 16 14" className="h-3.5 w-4"><path d="M0 1h6l1 1.500h9V14H0z" fill="#3fb8dc" /><path d="M2 5h12v7H2z" fill="#7edaf0" /><path d="M5 7h6v2H5z" fill="#2c9cc0" /></svg>
      </button>
      <span className="mx-1.5 h-2.5 w-px bg-[#aaa]" />
      <nav className="flex min-w-0 flex-1 gap-[3px]">
        {TASKS.map(t => (
          <button key={t.t} type="button" className={`flex h-[22px] min-w-0 flex-1 items-center gap-[7px] rounded-xs border pl-1.5 whitespace-nowrap ${t.on ? 'border-[#888] bg-[#b4b4b4]' : 'border-[#999] bg-linear-to-b from-[#fafafa] to-[#dcdcdc]'}`}>
            <svg viewBox="0 0 16 16" className="h-4 w-4 shrink-0">{TASK_ICONS[t.icon]}</svg>{t.t}
          </button>
        ))}
      </nav>
      <div className="flex shrink-0 items-center gap-2 pr-1 pl-3.5">
        <svg viewBox="0 0 20 18" className="h-[18px] w-5"><path d="M10 .5q5 2 9 2 0 12-9 15-9-3-9-15 4 0 9-2z" fill="#eee" stroke="#999" /><circle cx="10" cy="8.500" r="6" fill="#3468ac" /><path d="M10 4v2M10 7.500v5" stroke="#fff" strokeWidth="2" /></svg>
        <svg viewBox="0 0 18 16" className="h-4 w-[18px]" fill="none"><path d="M1 5.500h3L9 1v14l-5-4.500H1z" fill="#ddd" stroke="#555" /><path d="M11.500 5q2 3 0 6M14 3q3 5 0 10" stroke="#4a78c0" /></svg>
        <svg viewBox="0 0 18 16" className="h-4 w-[18px]"><path d="M5 1l5 5H7.500v5h-5V6H0z" fill="#888" /><path d="M10.500 6h5v4H18l-5 5-5-5h2.500z" fill="#777" /></svg>
        <svg viewBox="0 0 18 12" className="h-3 w-[18px]"><rect x="1" y="1.500" width="14" height="9" rx="1.500" fill="#888" stroke="#666" /><path d="M16 4h2v4h-2z" fill="#666" /><path d="M4 6l5-2v2h4L8 8.500V6.500z" fill="#222" /></svg>
        <time className="-ml-0.5 whitespace-pre">Fri Aug  7, 09:38</time>
      </div>
    </footer>
  )
}

const MENUS: [string, number][] = [['File', 0], ['Edit', 0], ['View', 0], ['Insert', 0], ['Format', 1], ['Table', 1], ['Tools', 0], ['Window', 0], ['Help', 0]]

export default function App() {
  return (
    <div className="relative flex h-screen w-full flex-col overflow-hidden bg-[#c0c0c0] font-[DejaVu_Sans] text-[11px] leading-4 text-black">
      <header className="flex h-[30px] shrink-0 items-center border-t border-[#aaa] bg-[#d4d4d4] pr-4 pb-0.5 pl-3.5 shadow-[inset_0_1px_#eee]">
        <Dot className="h-3 w-3 border border-[#aaa] bg-[#bbb]" />
        <h1 className={`ml-3.5 text-[#a0a0a0] ${TITLE}`}>mailmergeword.odt - LibreOffice Writer</h1>
        <div className="mb-1 flex gap-[7px]">{[0, 1, 2].map(i => <Dot key={i} className="h-[11px] w-[11px] bg-[#c4c4c4]" />)}</div>
      </header>
      <div className={`shrink-0 border-b border-[#808080] ${FADE}`}>
        <nav className="flex h-5 items-center gap-3 pt-0.5 pl-1.5">
          {MENUS.map(([t, at]) => <button key={t} type="button"><Acc t={t} at={at} /></button>)}
        </nav>
        <Toolbar label="Standard" items={STD} />
        <Toolbar label="Formatting" items={FMT}>
          <button type="button" aria-label="Styles" className="h-[23px] w-[31px] pl-[3px]"><Icon name="page" /></button>
          <Combo label="Paragraph style" value="Default Style" className="w-[104px]" />
          <Combo label="Font name" value="Liberation Serif" className="ml-[9px] w-[125px]" />
          <Combo label="Font size" value="12" className="mr-[9px] ml-[9px] w-[48px]" />
        </Toolbar>
      </div>
      <div className="mr-0.5 ml-0.5 shrink-0 border-t border-b border-t-white border-b-[#808080]">
        <div className={FADE}><Toolbar label="Table data" items={[...DATA, 'letters', 'source', '*explorer']} /></div>
      </div>
      <div className="flex h-[147px] shrink-0 gap-2 pt-0.5 pr-0.5 pl-[3px]">
        <div className={`flex h-[143px] w-[269px] bg-white p-0.5 ${SUNKEN}`}>
          <Tree rows={TREE} className="pt-0.5" />
          <div className="flex w-4 flex-col bg-[#ccc]">
            <ScrollBtn dir="up" />
            <span className="flex-1" />
            <span className={`h-9 ${RAISED}`} />
            <span className="h-3.5" />
            <ScrollBtn dir="down" />
          </div>
        </div>
        <div className="flex min-w-0 flex-1 flex-col border border-black bg-[#c0c0c0]">
          <div className="flex h-[127px] overflow-hidden">
            <div className="min-w-0 flex-1 bg-white"><Grid ids={IDS} cols={[{ t: 'NIM', w: 'w-[82px]' }, { t: '', w: '' }]} /></div>
            <div className="flex flex-col bg-[#ccc]">
              <span className="h-[18px] border-b border-black bg-[#c0c0c0]" />
              <ScrollBtn dir="up" off />
              <span className={`h-[57px] ${RAISED}`} />
              <span className="flex-1" />
              <ScrollBtn dir="down" />
            </div>
          </div>
          <label className="flex flex-1 items-center border-t border-black pl-px">Record<input defaultValue="1" className="ml-1 h-4 w-20 border-l border-black bg-white pl-[26px] outline-none" /></label>
        </div>
      </div>
      <div className="h-1.5 shrink-0 border-t border-b border-[#808080] shadow-[inset_0_1px_#fff]" />
      <main className="flex min-h-0 flex-1 bg-[#efefef]">
        <div className="flex min-w-0 flex-1 flex-col">
          <div className="flex h-[45px] shrink-0 items-start pt-1">
            <svg viewBox="0 0 24 16" className="h-4 w-6"><path d="M9 6v5h6" fill="none" stroke="#000" strokeWidth="2" /></svg>
            <div className="flex flex-1 justify-center"><HRuler /></div>
          </div>
          <div className="flex min-h-0 flex-1 pl-1">
            <VRuler />
            <div className="ml-1 flex flex-1 justify-center">
              <article className="w-[794px] bg-white px-[63px] pt-[75px] shadow-[0_0_3px_#aaa]"><hr className="border-[#ddd]" /></article>
            </div>
          </div>
        </div>
        <div className="flex w-4 flex-col bg-[#ccc]">
          <ScrollBtn dir="up" off />
          <span className={`h-[119px] ${RAISED}`} />
          <span className="flex-1" />
          <ScrollBtn dir="down" />
          <ScrollBtn dir="dup" />
          <button type="button" aria-label="Navigation" className={`h-4 w-4 ${RAISED}`} />
          <ScrollBtn dir="ddown" />
        </div>
      </main>
      <div className={`shrink-0 border-b border-[#808080] ${FADE}`}><Toolbar label="Mail merge navigation" items={NAV} /></div>
      <Taskbar />
      <MailMerge />
      <SaveAs />
    </div>
  )
}
